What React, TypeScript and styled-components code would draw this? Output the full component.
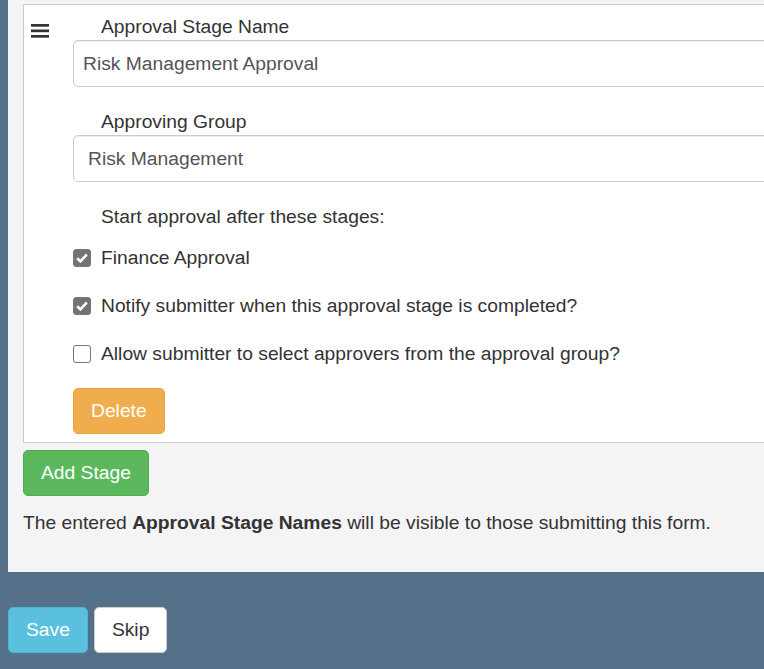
import React from "react";
import styled, { createGlobalStyle, css } from "styled-components";

const GlobalStyle = createGlobalStyle`
  html, body {
    margin: 0;
    padding: 0;
    background: #557089;
    overflow: hidden;
  }
  body {
    font-family: "Liberation Sans", Arial, Helvetica, sans-serif;
    font-size: 19.25px;
    line-height: 27px;
    color: #333;
  }
  * {
    box-sizing: border-box;
  }
`;

const Page = styled.div`
  width: 1000px;
  padding-left: 8px;
`;

const Panel = styled.div`
  background: #f4f4f4;
  padding: 4px 15px 36px;
`;

const StageCard = styled.div`
  display: flex;
  background: #fff;
  border: 1px solid #ccc;
`;

const Handle = styled.div`
  width: 49px;
  flex: none;
  padding: 13px 0 0 7px;
  color: #333;
`;

const StageBody = styled.div`
  flex: 1;
  display: flex;
  flex-direction: column;
  align-items: flex-start;
  padding: 8px 0 8px;
`;

const FormGroup = styled.div`
  width: 100%;
  margin-bottom: 21px;
`;

const FieldLabel = styled.label`
  display: block;
  padding-left: 28px;
  line-height: 27px;
  font-weight: normal;
`;

const fieldStyle = css`
  display: block;
  width: 100%;
  height: 47px;
  border: 1px solid #ccc;
  border-radius: 5px;
  background: #fff;
  font-family: inherit;
  font-size: 19.25px;
  line-height: 27px;
  color: #555;
  box-shadow: inset 0 1px 1px rgba(0, 0, 0, 0.075);
  outline: none;
`;

const TextInput = styled.input`
  ${fieldStyle}
  padding: 9px 9px;
`;

const Select = styled.select`
  ${fieldStyle}
  appearance: none;
  padding: 9px 14px;
`;

const CheckList = styled.div`
  display: flex;
  flex-direction: column;
  gap: 21px;
  margin-top: 14px;
`;

const CheckRow = styled.label`
  display: flex;
  align-items: center;
  gap: 10px;
  line-height: 27px;
`;

const CheckBox = styled.span<{ $checked?: boolean }>`
  display: inline-flex;
  align-items: center;
  justify-content: center;
  width: 18px;
  height: 18px;
  border-radius: 3px;
  border: 1px solid #767676;
  background: ${(p) => (p.$checked ? "#737373" : "#fff")};
`;

const Button = styled.button<{ $variant: "warning" | "success" | "info" | "default" }>`
  display: inline-block;
  height: 46px;
  padding: 0 17px;
  border-radius: 5px;
  font-family: inherit;
  font-size: 19.25px;
  line-height: 44px;
  cursor: pointer;
  ${(p) =>
    p.$variant === "warning" &&
    css`
      background: #f0ad4e;
      border: 1px solid #eea236;
      color: #fff;
    `}
  ${(p) =>
    p.$variant === "success" &&
    css`
      background: #5cb85c;
      border: 1px solid #4cae4c;
      color: #fff;
    `}
  ${(p) =>
    p.$variant === "info" &&
    css`
      background: #5bc0de;
      border: 1px solid #46b8da;
      color: #fff;
    `}
  ${(p) =>
    p.$variant === "default" &&
    css`
      background: #fff;
      border: 1px solid #ccc;
      color: #333;
    `}
`;

const DeleteButton = styled(Button)`
  margin-top: 21px;
`;

const AddButton = styled(Button)`
  margin-top: 7px;
`;

const Note = styled.p`
  margin: 13px 0 0;
  line-height: 27px;
`;

const Actions = styled.div`
  display: flex;
  gap: 6px;
  margin-top: 35px;
`;

const HamburgerIcon = () => (
  <svg width="18" height="14" viewBox="0 0 18 14" fill="#333">
    <rect x="0" y="0" width="18" height="2.7" />
    <rect x="0" y="5.5" width="18" height="2.7" />
    <rect x="0" y="11" width="18" height="2.7" />
  </svg>
);

const Check = ({ checked, children }: { checked?: boolean; children: React.ReactNode }) => (
  <CheckRow>
    <CheckBox $checked={checked}>
      {checked && (
        <svg width="12" height="10" viewBox="0 0 12 10">
          <path d="M1.2 5.2 L4.4 8.3 L10.8 1.5" fill="none" stroke="#fff" strokeWidth="2.6" />
        </svg>
      )}
    </CheckBox>
    {children}
  </CheckRow>
);

const App = () => {
  return (
    <>
      <GlobalStyle />
      <Page>
        <Panel>
          <StageCard>
            <Handle>
              <HamburgerIcon />
            </Handle>
            <StageBody>
              <FormGroup>
                <FieldLabel>Approval Stage Name</FieldLabel>
                <TextInput readOnly defaultValue="Risk Management Approval" />
              </FormGroup>
              <FormGroup>
                <FieldLabel>Approving Group</FieldLabel>
                <Select defaultValue="risk">
                  <option value="risk">Risk Management</option>
                </Select>
              </FormGroup>
              <FieldLabel>Start approval after these stages:</FieldLabel>
              <CheckList>
                <Check checked>Finance Approval</Check>
                <Check checked>Notify submitter when this approval stage is completed?</Check>
                <Check>Allow submitter to select approvers from the approval group?</Check>
              </CheckList>
              <DeleteButton $variant="warning">Delete</DeleteButton>
            </StageBody>
          </StageCard>
          <AddButton $variant="success">Add Stage</AddButton>
          <Note>
            The entered <strong>Approval Stage Names</strong> will be visible to those submitting
            this form.
          </Note>
        </Panel>
        <Actions>
          <Button $variant="info">Save</Button>
          <Button $variant="default">Skip</Button>
        </Actions>
      </Page>
    </>
  );
};

export default App;
